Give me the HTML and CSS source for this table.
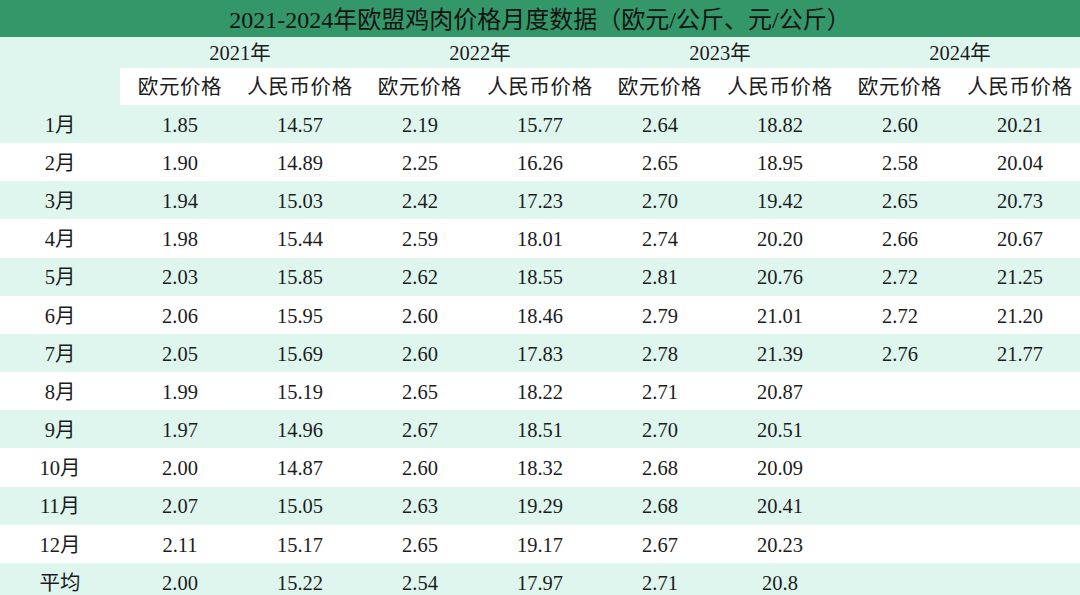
FILE: index.html
```html
<!DOCTYPE html>
<html lang="zh-CN">
<head>
<meta charset="utf-8">
<title>2021-2024年欧盟鸡肉价格月度数据</title>
<link rel="stylesheet" href="styles.css">
</head>
<body>
<div class="sheet">
  <div class="title">2021-2024年欧盟鸡肉价格月度数据（欧元/公斤、元/公斤）</div>
  <div class="head">
    <div class="corner"></div>
    <div class="head-main">
      <div class="years">
        <div class="year">2021年</div>
        <div class="year">2022年</div>
        <div class="year">2023年</div>
        <div class="year">2024年</div>
      </div>
      <div class="subs">
        <div class="sub">欧元价格</div><div class="sub">人民币价格</div>
        <div class="sub">欧元价格</div><div class="sub">人民币价格</div>
        <div class="sub">欧元价格</div><div class="sub">人民币价格</div>
        <div class="sub">欧元价格</div><div class="sub">人民币价格</div>
      </div>
    </div>
  </div>
  <div class="row alt"><div class="cell">1月</div><div class="cell">1.85</div><div class="cell">14.57</div><div class="cell">2.19</div><div class="cell">15.77</div><div class="cell">2.64</div><div class="cell">18.82</div><div class="cell">2.60</div><div class="cell">20.21</div></div>
  <div class="row"><div class="cell">2月</div><div class="cell">1.90</div><div class="cell">14.89</div><div class="cell">2.25</div><div class="cell">16.26</div><div class="cell">2.65</div><div class="cell">18.95</div><div class="cell">2.58</div><div class="cell">20.04</div></div>
  <div class="row alt"><div class="cell">3月</div><div class="cell">1.94</div><div class="cell">15.03</div><div class="cell">2.42</div><div class="cell">17.23</div><div class="cell">2.70</div><div class="cell">19.42</div><div class="cell">2.65</div><div class="cell">20.73</div></div>
  <div class="row"><div class="cell">4月</div><div class="cell">1.98</div><div class="cell">15.44</div><div class="cell">2.59</div><div class="cell">18.01</div><div class="cell">2.74</div><div class="cell">20.20</div><div class="cell">2.66</div><div class="cell">20.67</div></div>
  <div class="row alt"><div class="cell">5月</div><div class="cell">2.03</div><div class="cell">15.85</div><div class="cell">2.62</div><div class="cell">18.55</div><div class="cell">2.81</div><div class="cell">20.76</div><div class="cell">2.72</div><div class="cell">21.25</div></div>
  <div class="row"><div class="cell">6月</div><div class="cell">2.06</div><div class="cell">15.95</div><div class="cell">2.60</div><div class="cell">18.46</div><div class="cell">2.79</div><div class="cell">21.01</div><div class="cell">2.72</div><div class="cell">21.20</div></div>
  <div class="row alt"><div class="cell">7月</div><div class="cell">2.05</div><div class="cell">15.69</div><div class="cell">2.60</div><div class="cell">17.83</div><div class="cell">2.78</div><div class="cell">21.39</div><div class="cell">2.76</div><div class="cell">21.77</div></div>
  <div class="row"><div class="cell">8月</div><div class="cell">1.99</div><div class="cell">15.19</div><div class="cell">2.65</div><div class="cell">18.22</div><div class="cell">2.71</div><div class="cell">20.87</div><div class="cell"></div><div class="cell"></div></div>
  <div class="row alt"><div class="cell">9月</div><div class="cell">1.97</div><div class="cell">14.96</div><div class="cell">2.67</div><div class="cell">18.51</div><div class="cell">2.70</div><div class="cell">20.51</div><div class="cell"></div><div class="cell"></div></div>
  <div class="row"><div class="cell">10月</div><div class="cell">2.00</div><div class="cell">14.87</div><div class="cell">2.60</div><div class="cell">18.32</div><div class="cell">2.68</div><div class="cell">20.09</div><div class="cell"></div><div class="cell"></div></div>
  <div class="row alt"><div class="cell">11月</div><div class="cell">2.07</div><div class="cell">15.05</div><div class="cell">2.63</div><div class="cell">19.29</div><div class="cell">2.68</div><div class="cell">20.41</div><div class="cell"></div><div class="cell"></div></div>
  <div class="row"><div class="cell">12月</div><div class="cell">2.11</div><div class="cell">15.17</div><div class="cell">2.65</div><div class="cell">19.17</div><div class="cell">2.67</div><div class="cell">20.23</div><div class="cell"></div><div class="cell"></div></div>
  <div class="row alt"><div class="cell">平均</div><div class="cell">2.00</div><div class="cell">15.22</div><div class="cell">2.54</div><div class="cell">17.97</div><div class="cell">2.71</div><div class="cell">20.8</div><div class="cell"></div><div class="cell"></div></div>
</div>
</body>
</html>
```

FILE: styles.css
```css
html, body {
  margin: 0;
  padding: 0;
  background: #ffffff;
}

.sheet {
  width: 1080px;
  font-family: "Liberation Serif", "Noto Sans CJK SC", serif;
  font-size: 20.5px;
  line-height: 1;
  color: #1c1c1c;
  display: flex;
  flex-direction: column;
}

.title {
  height: 37px;
  box-sizing: border-box;
  padding-top: 2px;
  background: #33976a;
  color: #141414;
  font-size: 24px;
  display: flex;
  align-items: center;
  justify-content: center;
  white-space: nowrap;
}

.head {
  display: flex;
  background: #def6ee;
}

.corner {
  width: 120px;
  flex: none;
}

.head-main {
  flex: 1;
  display: flex;
  flex-direction: column;
}

.years {
  height: 31px;
  display: flex;
}

.year {
  width: 240px;
  box-sizing: border-box;
  padding-top: 2px;
  display: flex;
  align-items: center;
  justify-content: center;
}

.subs {
  height: 37px;
  display: flex;
  background: #ffffff;
}

.sub {
  width: 120px;
  box-sizing: border-box;
  padding-top: 2px;
  display: flex;
  align-items: center;
  justify-content: center;
  letter-spacing: 0.6px;
  white-space: nowrap;
}

.row {
  height: 38.17px;
  display: flex;
  background: #ffffff;
}

.row.alt {
  background: #def6ee;
}

.cell {
  width: 120px;
  flex: none;
  box-sizing: border-box;
  padding-top: 2px;
  display: flex;
  align-items: center;
  justify-content: center;
  white-space: nowrap;
}
```
